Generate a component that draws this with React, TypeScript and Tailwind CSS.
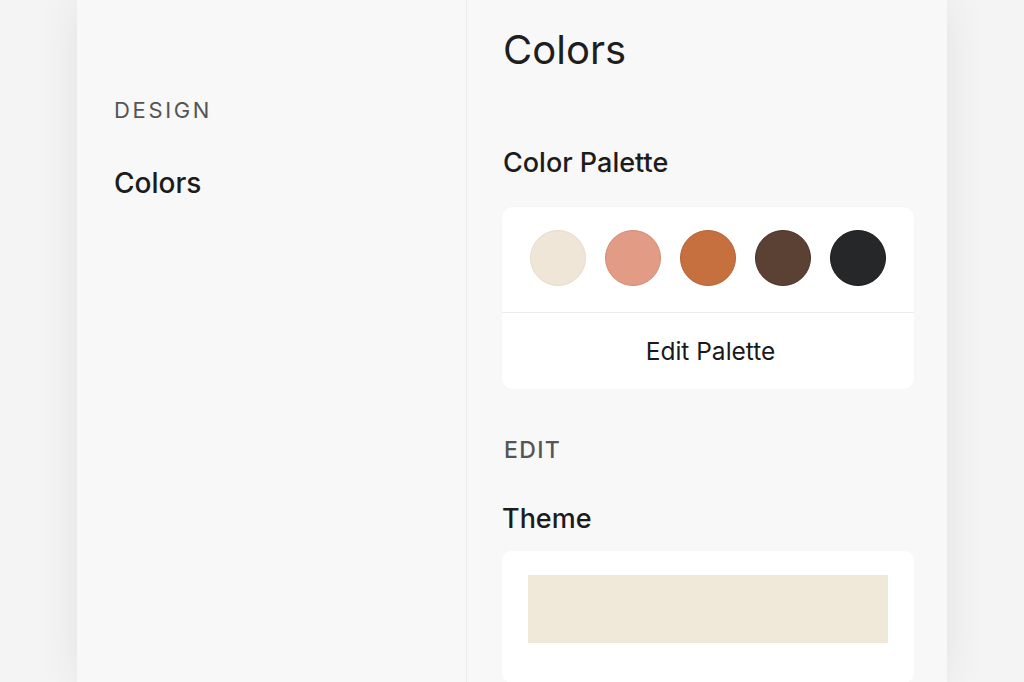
import React from "react";

const swatches = [
  { bg: "bg-[#efe6d7]", ring: "border-[#e6dccb]" },
  { bg: "bg-[#e29b85]", ring: "border-[#d28b76]" },
  { bg: "bg-[#c6703f]", ring: "border-[#b46336]" },
  { bg: "bg-[#5b4034]", ring: "border-[#4a3229]" },
  { bg: "bg-[#262728]", ring: "border-[#1a1a1a]" },
];

const App: React.FC = () => {
  return (
    <div
      className="h-screen w-full overflow-hidden bg-[#f4f4f4]"
      style={{ fontFamily: "Inter, 'Noto Sans', sans-serif" }}
    >
      <div className="mx-auto flex h-full w-[870px] bg-[#f8f8f8] shadow-[0_0_40px_rgba(0,0,0,0.08)]">
        {/* sidebar */}
        <aside className="w-[390px] shrink-0 border-r border-[#ebebeb] pl-[37px] pt-[96px]">
          <div className="text-[22px] leading-[28px] tracking-[0.12em] text-[#555555]">
            DESIGN
          </div>
          <div className="mt-[41px] text-[28px] font-medium leading-[36px] text-[#1c1c1c]">
            Colors
          </div>
        </aside>

        {/* main */}
        <main className="flex-1 pl-[35px] pr-[33px] pt-[26px]">
          <h1 className="pl-px text-[40px] font-normal leading-[48px] text-[#1e1e1e]">Colors</h1>

          <h2 className="mt-[72px] pl-px text-[27px] font-medium leading-[34px] text-[#1c1c1c]">
            Color Palette
          </h2>

          <div className="mt-[27px] rounded-[10px] bg-white shadow-[0_0_2px_rgba(0,0,0,0.03)]">
            <div className="flex justify-center gap-[19px] pt-[23px] pb-[26px]">
              {swatches.map((s, i) => (
                <div key={i} className={`h-[56px] w-[56px] rounded-full border ${s.bg} ${s.ring}`} />
              ))}
            </div>
            <div className="flex h-[77px] items-center justify-center border-t border-[#ededed] pl-[5px] text-[24.5px] leading-[30px] text-[#1a1a1a]">
              Edit Palette
            </div>
          </div>

          <div className="mt-[47px] pl-[2px] text-[23px] font-medium leading-[28px] tracking-[0.06em] text-[#555555]">
            EDIT
          </div>

          <h2 className="mt-[37px] text-[27px] font-medium leading-[36px] text-[#1c1c1c]">
            Theme
          </h2>

          <div className="mt-[14px] rounded-[10px] bg-white px-[26px] pt-[24px] pb-[40px]">
            <div className="h-[68px] bg-[#f0e8d8]" />
          </div>
        </main>
      </div>
    </div>
  );
};

export default App;
